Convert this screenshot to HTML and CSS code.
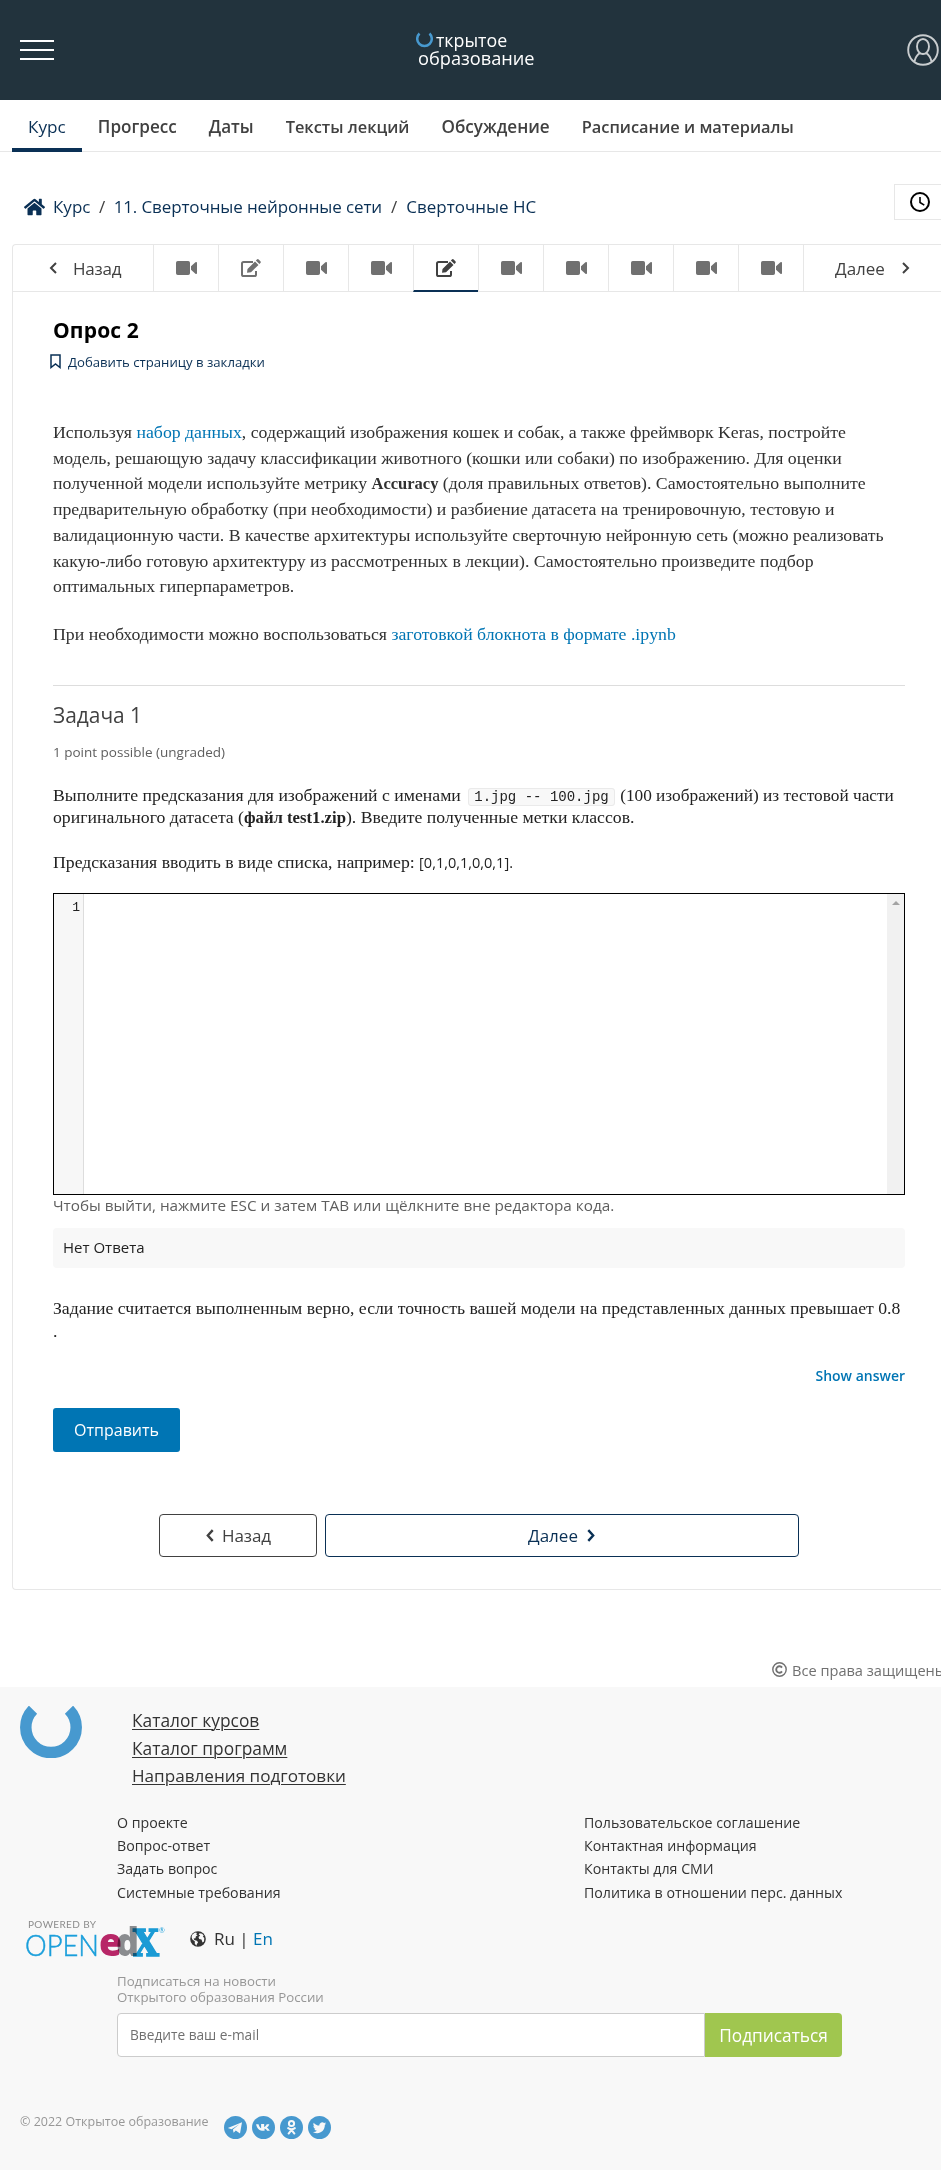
FILE: index.html
```
<!DOCTYPE html>
<html lang="ru">
<head>
<meta charset="utf-8">
<title>Опрос 2 | Открытое образование</title>
<link rel="stylesheet" href="styles.css">
</head>
<body>
<svg class="sprite" width="0" height="0">
  <symbol id="video" viewBox="0 0 21 14"><path d="M1.8 0h10.4Q14 0 14 1.8v10.4Q14 14 12.2 14H1.8Q0 14 0 12.2V1.8Q0 0 1.8 0zM15 5.2 19.4 1.3Q21 .6 21 2v10q0 1.4-1.6.7L15 8.800z"/></symbol>
  <symbol id="edit" viewBox="0 0 20 18"><path d="M12 3H2.600Q1 3 1 4.600V15.400Q1 17 2.600 17H13.400Q15 17 15 15.400V12" fill="none" stroke="currentColor" stroke-width="2"/><path d="M6 13.800 6.500 9.900 14 2.400 17.500 5.900 10 13.300zM14.900 1.500 15.900.5q.9-.8 1.800 0L19.400 2.200q.9.900 0 1.800L18.400 5z"/></symbol>
  <symbol id="left" viewBox="0 0 8 12"><path d="M7 1 2 6l5 5" fill="none" stroke="currentColor" stroke-width="2"/></symbol>
  <symbol id="right" viewBox="0 0 8 12"><path d="M1 1l5 5-5 5" fill="none" stroke="currentColor" stroke-width="2"/></symbol>
</svg>

<header class="top">
  <div class="burger"><i></i><i></i><i></i></div>
  <div class="logo">
    <div class="logo-first"><svg width="17" height="16" viewBox="0 0 17 16"><path d="M3.500 1.500A7.300 7.300 0 1 0 13.500 1.500" fill="none" stroke="#4799cf" stroke-width="2.500"/></svg>ткрытое</div>
    <div class="logo-second">образование</div>
  </div>
  <svg class="user" width="32" height="32" viewBox="0 0 32 32" fill="none" stroke="#c9cdcf" stroke-width="1.900"><circle cx="16" cy="16" r="14.800"/><ellipse cx="16" cy="12.500" rx="6" ry="7.500"/><path d="M7.500 27.500C8.500 22.500 10.500 20.500 13 19M24.500 27.500C23.500 22.500 21.500 20.500 19 19"/></svg>
</header>

<nav class="tabs">
  <a class="tab current">Курс</a><a class="tab wide">Прогресс</a><a class="tab wide">Даты</a><a class="tab">Тексты лекций</a><a class="tab wide">Обсуждение</a><a class="tab">Расписание и материалы</a>
</nav>

<div class="crumbs">
  <svg class="home" width="21" height="18" viewBox="0 30 576 452"><path d="M280.370 148.260L96 300.110V464a16 16 0 0 0 16 16l112.060-.29a16 16 0 0 0 15.920-16V368a16 16 0 0 1 16-16h64a16 16 0 0 1 16 16v95.640a16 16 0 0 0 16 16.050L464 480a16 16 0 0 0 16-16V300L295.670 148.260a12.190 12.190 0 0 0-15.300 0zM571.600 251.470L488 182.560V44.050a12 12 0 0 0-12-12h-56a12 12 0 0 0-12 12v72.610L318.470 43a48 48 0 0 0-61 0L4.340 251.470a12 12 0 0 0-1.600 16.900l25.500 31A12 12 0 0 0 45.150 301l235.220-193.740a12.190 12.190 0 0 1 15.300 0L530.900 301a12 12 0 0 0 16.900-1.600l25.500-31a12 12 0 0 0-1.700-16.930z"/></svg>
  <a>Курс</a><span>/</span><a class="chapter">11. Сверточные нейронные сети</a><span class="second">/</span><a>Сверточные НС</a>
  <div class="clock"><svg width="20" height="20" viewBox="0 0 20 20" fill="none" stroke="#000" stroke-width="2"><circle cx="10" cy="10" r="9"/><path d="M10 5v5.500l4.300 2.600" stroke-width="1.600"/></svg></div>
</div>

<main class="unit">
  <div class="seq">
    <a class="prev"><svg width="8" height="12"><use href="#left"/></svg><span>Назад</span></a>
    <a class="cell"><svg width="21" height="14"><use href="#video"/></svg></a>
    <a class="cell"><svg width="20" height="18"><use href="#edit"/></svg></a>
    <a class="cell"><svg width="21" height="14"><use href="#video"/></svg></a>
    <a class="cell"><svg width="21" height="14"><use href="#video"/></svg></a>
    <a class="cell active"><svg width="20" height="18"><use href="#edit"/></svg></a>
    <a class="cell"><svg width="21" height="14"><use href="#video"/></svg></a>
    <a class="cell"><svg width="21" height="14"><use href="#video"/></svg></a>
    <a class="cell"><svg width="21" height="14"><use href="#video"/></svg></a>
    <a class="cell"><svg width="21" height="14"><use href="#video"/></svg></a>
    <a class="cell"><svg width="21" height="14"><use href="#video"/></svg></a>
    <a class="next"><span>Далее</span><svg width="8" height="12"><use href="#right"/></svg></a>
  </div>
  <div class="content">
    <h2>Опрос 2</h2>
    <a class="bookmark"><svg width="11" height="15" viewBox="0 0 11 15" fill="none" stroke="#0a3055" stroke-width="1.500"><path d="M1 1h9v12.500L5.500 10 1 13.500z"/></svg>Добавить страницу в закладки</a>
    <p class="intro">Используя <a>набор данных</a>, содержащий изображения кошек и собак, а также фреймворк Keras, постройте<br>модель, решающую задачу классификации животного (кошки или собаки) по изображению. Для оценки<br>полученной модели используйте метрику <b>Accuracy</b> (доля правильных ответов). Самостоятельно выполните<br>предварительную обработку (при необходимости) и разбиение датасета на тренировочную, тестовую и<br>валидационную части. В качестве архитектуры используйте сверточную нейронную сеть (можно реализовать<br>какую-либо готовую архитектуру из рассмотренных в лекции). Самостоятельно произведите подбор<br>оптимальных гиперпараметров.</p>
    <p class="intro note">При необходимости можно воспользоваться <a>заготовкой блокнота в формате .ipynb</a></p>
    <section class="problem">
      <h3>Задача 1</h3>
      <div class="points">1 point possible (ungraded)</div>
      <p class="task">Выполните предсказания для изображений с именами <code>1.jpg -- 100.jpg</code> <span class="narrow">(100 изображений) из тестовой части</span><br>оригинального датасета (<b>файл test1.zip</b>). Введите полученные метки классов.</p>
      <p class="task">Предсказания вводить в виде списка, например: <span class="list">[0,1,0,1,0,0,1].</span></p>
      <div class="editor"><div class="gutter">1</div><div class="code"></div><div class="scroll"><i></i></div></div>
      <div class="hint">Чтобы выйти, нажмите ESC и затем TAB или щёлкните вне редактора кода.</div>
      <div class="answer">Нет Ответа</div>
      <p class="task rule">Задание считается выполненным верно, если точность вашей модели на представленных данных превышает 0.8<br>.</p>
      <a class="show">Show answer</a>
      <button class="submit">Отправить</button>
    </section>
    <div class="pager">
      <a class="back"><svg width="10" height="13" viewBox="0 0 8 12"><path d="M6.500 1 2 6l4.500 5" fill="none" stroke="currentColor" stroke-width="2.200"/></svg>Назад</a>
      <a class="forward">Далее<svg width="10" height="13" viewBox="0 0 8 12"><path d="M1.500 1 6 6 1.500 11" fill="none" stroke="currentColor" stroke-width="2.200"/></svg></a>
    </div>
  </div>
</main>
<div class="rights"><svg width="15" height="15" viewBox="0 0 15 15" fill="none" stroke="#707070"><circle cx="7.500" cy="7.500" r="6.700" stroke-width="1.400"/><path d="M10 5.600A3.200 3.200 0 1 0 10 9.400" stroke-width="1.900"/></svg>Все права защищены</div>

<footer class="foot">
  <div class="foot-main">
    <svg width="62" height="52" viewBox="0 .8 62 52"><path d="M13 4.500A25.200 25.200 0 1 0 49 4.500" fill="none" stroke="#4799cf" stroke-width="11.500"/></svg>
    <div class="catalog"><a>Каталог курсов</a><a>Каталог программ</a><a class="tight">Направления подготовки</a></div>
  </div>
  <div class="foot-links">
    <div><a>О проекте</a><a>Вопрос-ответ</a><a>Задать вопрос</a><a>Системные требования</a></div>
    <div><a>Пользовательское соглашение</a><a>Контактная информация</a><a>Контакты для СМИ</a><a>Политика в отношении перс. данных</a></div>
  </div>
  <div class="powered">
    <svg class="edx" width="140" height="38" viewBox="0 0 140 38">
      <text class="pw" x="2" y="8.300" textLength="68">POWERED BY</text>
      <text class="open" x="-1" y="35.500" textLength="74" lengthAdjust="spacingAndGlyphs">OPEN</text>
      <text class="ed e" x="73" y="35.500" textLength="23" lengthAdjust="spacingAndGlyphs">e</text>
      <text class="ed d" x="90" y="35.500" textLength="23" lengthAdjust="spacingAndGlyphs">d</text>
      <text class="x" x="107" y="35.500" textLength="26" lengthAdjust="spacingAndGlyphs">X</text>
      <text class="reg" x="133" y="13">®</text>
    </svg>
    <svg class="globe" width="16" height="16" viewBox="0 0 16 16"><circle cx="8" cy="8" r="7.800" fill="#333"/><path d="M2.200 3.800 5 1.600l2.200.4L6 3.300l1.600.9-1.800 1.300-.3 1.700-1.900.2.700 1.600 2.500.8 1.300 1.500-1 1.500-.8 2-1.600-2.300.2-2L2.200 8.200 1.600 6zM9.500 2.200l2.700.6 1.600 2-1 .8 1.500 1.300-.3 3.500-1.500 1-1-2.800-2.300-.6-.7-2 1.700-1.600-1.500-.8z" fill="#f8f8f8"/></svg>
    <span class="lang">Ru | <a>En</a></span>
  </div>
  <div class="news">Подписаться на новости<br>Открытого образования России</div>
  <div class="subscribe"><div class="field">Введите ваш e-mail</div><button>Подписаться</button></div>
  <div class="bottom">
    <span>© 2022 Открытое образование</span>
    <div class="social">
      <svg viewBox="0 0 24 24"><circle cx="12" cy="12" r="12"/><path d="M4 12.500 18.800 6.400 16.700 18.200 12.300 15.200 10 17.600 9.300 14.200 16 8.700 7.900 13.700z"/></svg>
      <svg viewBox="0 0 24 24"><circle cx="12" cy="12" r="12"/><path d="M4.300 8.500h2.500c.5 2 1.500 3.500 2.700 4.200V8.300h3.200v3.300c1-.5 2-1.700 2.700-3.100h2.700c-.5 1.500-1.400 2.700-2.500 3.600 1.300.8 2.300 1.900 3 3.400h-2.800c-.6-1.200-1.600-2-2.700-2.400v2.400h-1.200C8 15.500 5 13 4.300 8.500z"/></svg>
      <svg viewBox="0 0 24 24"><circle cx="12" cy="12" r="12"/><g fill="none" stroke="#f8f8f8" stroke-width="2.100" stroke-linecap="round"><circle cx="12" cy="7.800" r="2.700"/><path d="M8.500 12.700q3.500 2.200 7 0M12 14.500 9 18.300M12 14.500 15 18.300"/></g></svg>
      <svg viewBox="0 0 24 24"><circle cx="12" cy="12" r="12"/><path d="M19 7.700c-.5.300-1 .4-1.600.5.600-.4 1-.9 1.200-1.500-.6.300-1.200.5-1.800.7a3 3 0 0 0-5 2.600c-2.300-.1-4.400-1.200-5.800-3-.8 1.300-.4 3 .9 3.800-.5 0-.9-.1-1.300-.3 0 1.400 1 2.600 2.300 2.900-.4.100-.9.100-1.300 0 .4 1.200 1.400 2 2.700 2-1.200 1-2.700 1.400-4.200 1.200 5.500 3.500 12.600 0 12.500-7.400.6-.4 1-.9 1.400-1.500z"/></svg>
    </div>
  </div>
</footer>
</body>
</html>
```
FILE: styles.css
```
* { box-sizing: border-box; }
body { margin: 0; background: #fff; font-family: "Open Sans", "Noto Sans", sans-serif; color: #414141; overflow-x: hidden; white-space: nowrap; }
h2, h3, p { margin: 0; font-weight: 400; }
button { font-family: inherit; border: 0; padding: 0; }
svg { display: block; flex: none; }
.sprite { position: absolute; }

.top { height: 100px; background: #22333d; display: flex; align-items: center; padding-left: 20px; }
.burger { width: 34px; height: 20px; display: flex; flex-direction: column; justify-content: space-between; }
.burger i { height: 2px; background: #fff; }
.logo { width: 124px; margin: -2px 0 0 362px; color: #fff; font-weight: 500; line-height: 18px; }
.logo-first { display: flex; gap: 3px; font-size: 17.800px; }
.logo-second { padding-left: 2px; font-size: 18.200px; }
.logo-first svg { margin-top: 1px; }
.user { margin-left: 367px; }

.tabs { height: 52px; border-bottom: 1px solid #e7e7e7; display: flex; padding-left: 12px; }
.tab { height: 52px; padding: 0 16px; line-height: 54px; font-size: 16.400px; font-weight: 600; }
.wide { font-size: 17.100px; }
.current { font-weight: 400; font-size: 17.200px; color: #0a3055; border-bottom: 4px solid #0a3055; }

.crumbs { height: 92px; display: flex; padding: 42px 0 0 24px; font-size: 17px; line-height: 25px; color: #0a3055; }
.crumbs span { margin: 0 8.500px; color: #414141; }
.crumbs .second { margin: 0 9px; }
.crumbs .chapter { letter-spacing: -.12px; }
.home { margin: 4px 8px 0 0; fill: #0a3055; }
.clock { width: 60px; height: 36px; margin: -10px -13px 0 auto; border: 1px solid #e7e7e7; padding: 7px 15px; }

.unit { margin-left: 12px; border: 1px solid #e7e7e7; border-right: 0; border-radius: 4px 0 0 4px; height: 1346px; }
.seq { height: 47px; display: flex; border-bottom: 1px solid #e7e7e7; color: #414141; font-size: 17px; }
.seq a { display: flex; align-items: center; height: 46px; }
.prev { width: 140px; padding-left: 36px; letter-spacing: -.2px; }
.prev span { margin: 1px 0 0 16px; }
.cell { width: 65px; border-left: 1px solid #e7e7e7; justify-content: center; color: #707070; fill: #707070; }
.seq .active { color: #414141; fill: #414141; border-bottom: 2px solid #0a3055; height: 47px; padding-top: 1px; }
.next { flex: 1; border-left: 1px solid #e7e7e7; padding-left: 31px; }
.next span { margin: 1px 17px 0 0; }

.content { padding: 23px 36px 0 40px; }
h2 { font-size: 21px; line-height: 30px; font-weight: 700; color: #000; letter-spacing: .15px; }
.bookmark { display: flex; margin: 7px 0 0 -3px; font-size: 13.150px; line-height: 20px; color: #0a3055; gap: 7px; }
.bookmark svg { margin-top: 2px; }
.intro { margin-top: 48px; font: 17.750px/25.700px "Liberation Serif", serif; color: #313131; }
.intro b { font-size: 16.500px; }
.intro a { color: #0075b4; }
.note { margin-top: 22px; }
.problem { margin-top: 37.100px; border-top: 1px solid #ddd; padding-top: 14px; }
h3 { font-size: 20.900px; line-height: 30px; }
.points { margin-top: 12px; font-size: 13.500px; line-height: 20px; color: #5e5e5e; }
.task { margin-top: 22px; font: 17.720px/22.400px "Liberation Serif", serif; color: #222; }
.task b { font-size: 16.700px; line-height: 0; }
.narrow { font-size: 17.300px; line-height: 0; }
.list { font: 14.500px/0 "Open Sans", sans-serif; }
code { font: 14px/0 "Liberation Mono", monospace; padding: 0 5px; margin: 0 1px 0 3px; border: 1px solid #eaeaea; border-radius: 3px; background: #f8f8f8; color: #222; }
.editor { margin-top: 20px; height: 302px; border: 1px solid #000; display: flex; }
.gutter { width: 30px; background: #f7f7f7; border-right: 1px solid #ddd; font: 13px/20px "Liberation Mono", monospace; color: #222; text-align: right; padding: 4px 3px 0 0; }
.code { flex: 1; }
.scroll { width: 17px; background: #f1f1f1; padding: 7px 5px; }
.scroll i { display: block; border: 4px solid transparent; border-top: 0; border-bottom-color: #a3a3a3; width: 8px; }
.hint { font-size: 15.300px; line-height: 20px; color: #5e5e5e; }
.answer { margin-top: 13px; height: 40px; border-radius: 4px; background: #f8f8f8; padding-left: 10px; font-size: 15px; line-height: 39px; color: #222; }
.rule { margin-top: 29.400px; }
.show { display: block; margin-top: 24px; text-align: right; font-size: 14px; line-height: 20px; font-weight: 600; color: #0075b4; }
.submit { display: block; margin-top: 22px; width: 127px; height: 44px; border-radius: 3px; background: #0075b4; color: #fff; font-size: 16px; }
.pager { display: flex; gap: 8px; margin: 62px 0 0 106px; font-size: 17px; }
.pager a { height: 43px; border: 1px solid #414141; border-radius: 4px; display: flex; align-items: center; justify-content: center; line-height: 44px; }
.back { width: 158px; gap: 7px; letter-spacing: -.1px; }
.pager .forward { width: 474px; gap: 8px; border-color: #0a3055; color: #0a3055; }

.rights { margin: 69px 0 0 772px; display: flex; gap: 5px; height: 28px; font-size: 14.600px; line-height: 22px; color: #707070; overflow: hidden; }
.rights svg { margin-top: 3px; }

.foot { height: 483px; background: #f8f8f8; color: #333; padding: 19px 20px 0; }
.foot-main { display: flex; gap: 50px; }
.catalog { display: flex; flex-direction: column; align-items: flex-start; font-size: 17.350px; line-height: 28px; }
.catalog a { text-decoration: underline; text-underline-offset: 2px; text-decoration-thickness: 1px; }
.catalog .tight { font-size: 17.120px; }
.foot-links { display: flex; margin: 20.500px 0 0 97px; font-size: 14.200px; line-height: 23.400px; }
.foot-links div { flex: 0 0 467px; display: flex; flex-direction: column; }
.foot-links div + div { flex-basis: 258px; }
.powered { display: flex; margin: 16px 0 0 6px; height: 38px; }
.edx { overflow: visible; }
.pw { font: 10px Lato, sans-serif; fill: #8c8c8c; }
.open { font: 300 30px Lato, sans-serif; fill: #1b9fdb; stroke: #1b9fdb; stroke-width: .5px; }
.ed { font: 800 38px "Open Sans", sans-serif; }
.e { fill: #b72667; }
.d { fill: #8e9093; mix-blend-mode: multiply; }
.x { font: 700 38px "DejaVu Serif", serif; fill: #1b9fdb; stroke: #1b9fdb; stroke-width: 1.400px; mix-blend-mode: multiply; }
.reg { font: 7px Lato, sans-serif; fill: #1b9fdb; }
.globe { margin: 11px 0 0 24px; }
.lang { margin-left: 8px; font-size: 17px; line-height: 37px; }
.lang a { color: #0075b4; }
.news { margin: 15px 0 0 97px; font-size: 13.260px; line-height: 16px; color: #979797; }
.subscribe { display: flex; margin: 8px 0 0 97px; height: 44px; }
.field { width: 588px; border: 1px solid #ccc; border-radius: 4px 0 0 4px; background: #fff; padding-left: 12px; font-size: 13.700px; line-height: 42px; color: #707070; }
.subscribe button { width: 137px; background: #a0c64f; color: #fff; border-radius: 0 4px 4px 0; font-size: 17.300px; }
.bottom { display: flex; margin-top: 54px; font-size: 12.500px; line-height: 21px; color: #979797; gap: 15px; }
.social { display: flex; gap: 5px; margin-top: 5px; }
.social svg { width: 23px; height: 23px; }
.social circle { fill: #4799cf; }
.social path { fill: #f8f8f8; }
.social g * { fill: none; }
```
